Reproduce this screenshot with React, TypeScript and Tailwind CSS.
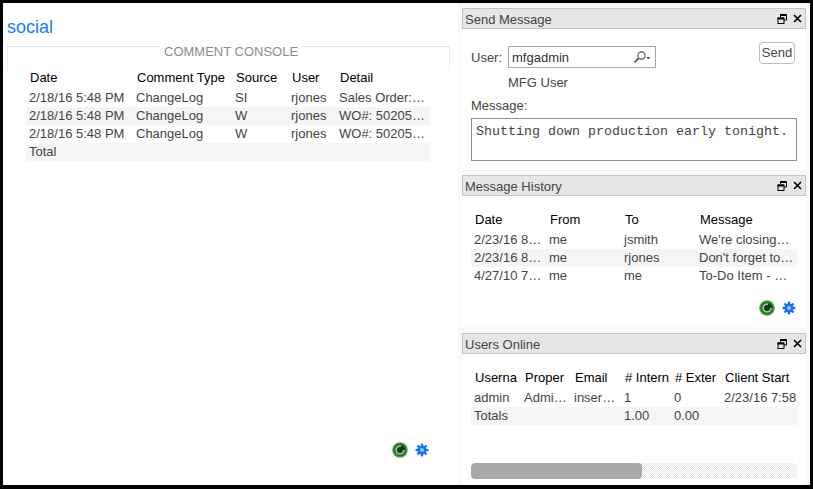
import type { ReactNode } from 'react';

const cellText = 'truncate px-[3px] text-left font-normal';

function RestoreIcon() {
  return (
    <svg width="10" height="10" viewBox="0 0 10 10" className="text-black">
      <path d="M3.5 3V.5h6V6H7" fill="none" stroke="currentColor" strokeWidth="1" />
      <path d="M3 1h6" stroke="currentColor" strokeWidth="2" />
      <rect x="1" y="4" width="6" height="5.5" fill="none" stroke="currentColor" strokeWidth="1" />
      <path d="M0.5 4.5h6.5" stroke="currentColor" strokeWidth="2" />
    </svg>
  );
}

function CloseIcon() {
  return (
    <svg width="9" height="9" viewBox="0 0 9 9" className="text-black">
      <path d="M1 1l7 7M8 1L1 8" stroke="currentColor" strokeWidth="1.6" />
    </svg>
  );
}

function SearchIcon() {
  return (
    <svg width="18" height="14" viewBox="0 0 18 14">
      <circle cx="8.5" cy="5.5" r="3.6" fill="none" stroke="#555" strokeWidth="1.1" />
      <path d="M5.6 8.4L1.4 12.4" stroke="#555" strokeWidth="1.8" />
      <path d="M13 7h4.4l-2.2 2.2z" fill="#555" />
    </svg>
  );
}

function RefreshIcon() {
  return (
    <svg width="16" height="16" viewBox="0 0 16 16">
      <defs>
        <radialGradient id="ring" cx="50%" cy="50%" r="50%">
          <stop offset="55%" stopColor="#0c3d0c" />
          <stop offset="80%" stopColor="#2f8f2f" />
          <stop offset="100%" stopColor="#5fae5f" />
        </radialGradient>
      </defs>
      <circle cx="8" cy="8" r="7.8" fill="url(#ring)" />
      <circle cx="8" cy="8" r="3.9" fill="none" stroke="#a9bda4" strokeWidth="1.8" strokeDasharray="19 5.5" />
      <circle cx="8" cy="8" r="2" fill="#1c3a1c" />
    </svg>
  );
}

function GearIcon() {
  return (
    <svg width="14" height="14" viewBox="0 0 14 14">
      <g fill="#1c74e8">
        <circle cx="7" cy="7" r="4.6" />
        <rect x="5.8" y="0.6" width="2.4" height="12.8" />
        <rect x="5.8" y="0.6" width="2.4" height="12.8" transform="rotate(45 7 7)" />
        <rect x="5.8" y="0.6" width="2.4" height="12.8" transform="rotate(90 7 7)" />
        <rect x="5.8" y="0.6" width="2.4" height="12.8" transform="rotate(135 7 7)" />
      </g>
      <circle cx="7" cy="7" r="2" fill="#9cc6f7" />
    </svg>
  );
}

function GridActions() {
  return (
    <div className="flex items-center justify-end gap-[7px]">
      <RefreshIcon />
      <GearIcon />
    </div>
  );
}

function Panel({ title, className, children }: { title: string; className: string; children: ReactNode }) {
  return (
    <section className={`bg-white ${className}`}>
      <header className="flex h-[21px] items-center border border-[#c4c4c4] bg-[#e6e6e6] pl-[2px] pr-[3px] text-[#444]">
        <span className="flex-1 pt-[2px]">{title}</span>
        <span className="flex items-center gap-[6px]">
          <RestoreIcon />
          <CloseIcon />
        </span>
      </header>
      {children}
    </section>
  );
}

function DataTable({
  widths,
  head,
  rows,
  stripes,
  className = '',
}: {
  widths: number[];
  head: string[];
  rows: string[][];
  stripes: number[];
  className?: string;
}) {
  return (
    <table className={`w-full table-fixed border-collapse ${className}`}>
      <colgroup>
        {widths.map((w, i) => (
          <col key={i} style={{ width: w }} />
        ))}
      </colgroup>
      <thead>
        <tr className="h-[22px] text-black">
          {head.map((h) => (
            <th key={h} className="whitespace-nowrap pl-[4px] text-left font-normal">
              {h}
            </th>
          ))}
        </tr>
      </thead>
      <tbody className="text-[#444]">
        {rows.map((row, i) => (
          <tr key={i} className={stripes.includes(i) ? 'h-[18px] bg-[#f5f5f5]' : 'h-[18px]'}>
            {row.map((c, j) => (
              <td key={j} className={cellText}>
                {c}
              </td>
            ))}
          </tr>
        ))}
      </tbody>
    </table>
  );
}

export default function App() {
  return (
    <div className="flex h-[489px] w-[813px] border-[3px] border-b-[4px] border-black bg-white font-['Liberation_Sans',Arial,sans-serif] text-[13px] leading-[18px]">
      {/* Left side */}
      <main className="flex w-[455px] flex-col pl-[4px] pr-[8px]">
        <h1 className="mt-[13px] text-[18px] leading-[22px] text-[#1a7cf5]">social</h1>
        <div className="relative mt-[8px] h-[24px] border-x border-t border-x-[#ececec] border-t-[#e0e0e0]">
          <span className="absolute left-[151px] top-[-3px] bg-white px-[5px] leading-[15px] text-[#8c8c8c]">
            COMMENT CONSOLE
          </span>
        </div>
        <div className="mt-[-3px] ml-[19px] w-[404px] self-start">
          <DataTable
            widths={[107, 99, 56, 48, 94]}
            head={['Date', 'Comment Type', 'Source', 'User', 'Detail']}
            rows={[
              ['2/18/16 5:48 PM', 'ChangeLog', 'SI', 'rjones', 'Sales Order: 50205 changed'],
              ['2/18/16 5:48 PM', 'ChangeLog', 'W', 'rjones', 'WO#: 50205-001 changed'],
              ['2/18/16 5:48 PM', 'ChangeLog', 'W', 'rjones', 'WO#: 50205-002 changed'],
              ['Total', '', '', '', ''],
            ]}
            stripes={[1, 3]}
          />
        </div>
        <div className="mt-auto mb-[27px] pr-[21px]">
          <GridActions />
        </div>
      </main>

      {/* Right side */}
      <aside className="flex flex-1 flex-col bg-[#f9f9f9] pl-[4px] pr-[4px] pt-[5px]">
        <Panel title="Send Message" className="h-[162px]">
          <div className="relative pl-[9px] pr-[9px]">
            <div className="flex items-center pt-[17px]">
              <span className="w-[37px] pt-[1px] text-[#444]">User:</span>
              <div className="flex h-[22px] w-[148px] items-center border border-[#a8a8a8] pl-[3px] pr-[4px] text-[#333]">
                <span className="flex-1 pt-[1px]">mfgadmin</span>
                <SearchIcon />
              </div>
            </div>
            <button className="absolute right-[11px] top-[13px] h-[22px] w-[36px] rounded-[4px] border border-[#bdbdbd] text-[#444]">
              Send
            </button>
            <p className="mt-[6px] pl-[37px] text-[#444]">MFG User</p>
            <p className="mt-[5px] text-[#444]">Message:</p>
            <textarea
              readOnly
              value="Shutting down production early tonight."
              className="mt-[3px] block h-[43px] w-[326px] resize-none border border-[#8f8f8f] px-[4px] py-[5px] font-['Liberation_Mono','Courier_New',monospace] text-[13.33px] leading-[16px] text-[#444]"
            />
          </div>
        </Panel>

        <Panel title="Message History" className="mt-[5px] h-[152px]">
          <div className="pl-[9px] pr-[9px] pt-[13px]">
            <DataTable
              widths={[75, 75, 75, 101]}
              head={['Date', 'From', 'To', 'Message']}
              rows={[
                ['2/23/16 8:12 AM', 'me', 'jsmith', 'We\'re closing…'],
                ['2/23/16 8:10 AM', 'me', 'rjones', "Don't forget to submit time"],
                ['4/27/10 7:30 AM', 'me', 'me', 'To-Do Item - Follow up call'],
              ]}
              stripes={[1]}
            />
            <div className="mt-[15px] pr-[1px]">
              <GridActions />
            </div>
          </div>
        </Panel>

        <Panel title="Users Online" className="mt-[6px] flex-1">
          <div className="pl-[9px] pr-[9px] pt-[13px]">
            <DataTable
              className="[&_td:last-child]:pr-0"
              widths={[50, 50, 50, 50, 50, 76]}
              head={['Userna', 'Proper', 'Email', '# Intern', '# Exter', 'Client Start']}
              rows={[
                ['admin', 'Administrator', 'inserted@mail.com', '1', '0', '2/23/16 7:58'],
                ['Totals', '', '', '1.00', '0.00', ''],
              ]}
              stripes={[1]}
            />
            <div className="mt-[38px] h-[16px] overflow-hidden rounded-[4px] bg-[repeating-conic-gradient(#e8e8e8_0_25%,#ffffff_0_50%)] bg-[length:2px_2px]">
              <div className="h-full w-[171px] rounded-[4px] bg-[#a9a9a9]" />
            </div>
          </div>
        </Panel>
      </aside>
    </div>
  );
}
